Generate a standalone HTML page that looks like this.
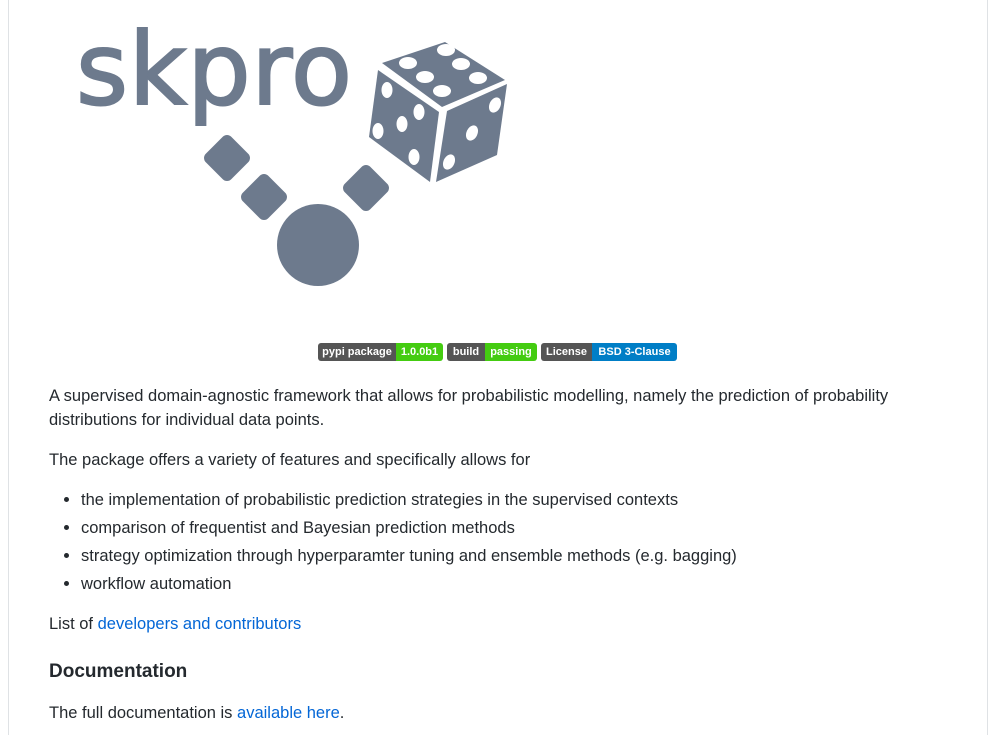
<!DOCTYPE html>
<html><head><meta charset="utf-8"><style>
body{margin:0;width:1002px;height:735px;overflow:hidden;background:#fff;font-family:"Liberation Sans",sans-serif;color:#24292e;position:relative}
.bl{position:absolute;top:0;bottom:0;width:1px;background:#dfe2e5}
.t{position:absolute;left:49px;font-size:16.5px;white-space:nowrap;line-height:24px}
a{color:#0366d6;text-decoration:none}
.li{left:81px}
.dot{position:absolute;left:64px;width:5px;height:5px;border-radius:50%;background:#24292e}
.badge{position:absolute;top:343px;height:18px;border-radius:3px;overflow:hidden;display:flex;font-size:11px;font-weight:bold;color:#fff;font-family:"Liberation Sans",sans-serif;line-height:18px;text-align:center;white-space:nowrap}
.badge span{display:block}
.d{background:#555}.g{background:#4c1}.b{background:#007ec6}
</style></head><body>
<div class="bl" style="left:8px"></div>
<div class="bl" style="left:987px"></div>
<svg style="position:absolute;left:0;top:0" width="560" height="300">
<g fill="#6d7a8d">
<text x="76" y="104" font-family="DejaVu Sans,Liberation Sans,sans-serif" font-size="100" stroke="#6d7a8d" stroke-width="2" textLength="276" lengthAdjust="spacing">skpro</text>
<polygon points="382,63 445,42 505,80 442,107"/>
<polygon points="378,70 439,112 430,182 369,137"/>
<polygon points="447,111 507,84 497,155 436,182"/>
<rect x="209" y="140" width="36" height="36" rx="6" transform="rotate(45 227 158)"/>
<rect x="246" y="179" width="36" height="36" rx="6" transform="rotate(45 264 197)"/>
<rect x="348" y="170" width="36" height="36" rx="6" transform="rotate(45 366 188)"/>
<circle cx="318" cy="245" r="41"/>
</g>
<g fill="#fff">
<ellipse cx="408" cy="63" rx="9" ry="6"/><ellipse cx="446" cy="50" rx="9" ry="6"/>
<ellipse cx="425" cy="77" rx="9" ry="6"/><ellipse cx="461" cy="64" rx="9" ry="6"/>
<ellipse cx="442" cy="91" rx="9" ry="6"/><ellipse cx="478" cy="78" rx="9" ry="6"/>
<ellipse cx="387" cy="90" rx="5.5" ry="8"/><ellipse cx="419" cy="112" rx="5.5" ry="8"/>
<ellipse cx="402" cy="124" rx="5.5" ry="8"/><ellipse cx="378" cy="131" rx="5.5" ry="8"/>
<ellipse cx="414" cy="157" rx="5.5" ry="8"/>
<ellipse cx="495" cy="105" rx="5.5" ry="8" transform="rotate(25 495 105)"/>
<ellipse cx="472" cy="133" rx="5.5" ry="8" transform="rotate(25 472 133)"/>
<ellipse cx="449" cy="162" rx="5.5" ry="8" transform="rotate(25 449 162)"/>
</g>
</svg>
<div class="badge" style="left:318px"><span class="d" style="width:78px">pypi package</span><span class="g" style="width:47px">1.0.0b1</span></div>
<div class="badge" style="left:447px"><span class="d" style="width:38px">build</span><span class="g" style="width:52px">passing</span></div>
<div class="badge" style="left:541px"><span class="d" style="width:51px">License</span><span class="b" style="width:85px">BSD 3-Clause</span></div>
<div class="t" style="top:384px">A supervised domain-agnostic framework that allows for probabilistic modelling, namely the prediction of probability</div>
<div class="t" style="top:408px">distributions for individual data points.</div>
<div class="t" style="top:448px">The package offers a variety of features and specifically allows for</div>
<div class="dot" style="top:497px"></div><div class="t li" style="top:488px">the implementation of probabilistic prediction strategies in the supervised contexts</div>
<div class="dot" style="top:525px"></div><div class="t li" style="top:516px">comparison of frequentist and Bayesian prediction methods</div>
<div class="dot" style="top:553px"></div><div class="t li" style="top:544px">strategy optimization through hyperparamter tuning and ensemble methods (e.g. bagging)</div>
<div class="dot" style="top:581px"></div><div class="t li" style="top:572px">workflow automation</div>
<div class="t" style="top:612px">List of <a>developers and contributors</a></div>
<div class="t" style="top:658px;font-size:19px;font-weight:bold;line-height:28px">Documentation</div>
<div class="t" style="top:701px">The full documentation is <a>available here</a>.</div>
</body></html>
